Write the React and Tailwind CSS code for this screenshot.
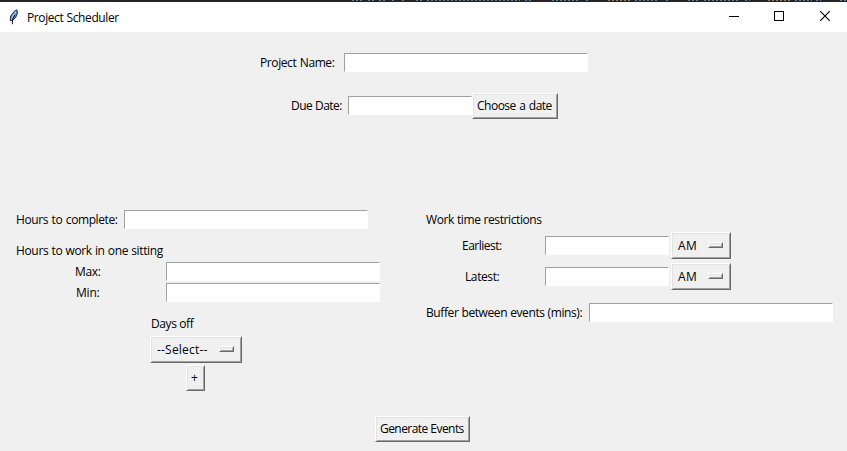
import React from "react";

function Label({ className = "", children }) {
  return <span className={`block whitespace-nowrap ${className}`}>{children}</span>;
}

function Entry({ className = "" }) {
  return (
    <input
      type="text"
      className={`block h-[19px] shrink-0 border border-t-[#a0a0a0] border-l-[#a0a0a0] border-r-white border-b-white bg-white px-px outline-none ${className}`}
    />
  );
}

function Raised({ className = "", children }) {
  return (
    <button
      type="button"
      className={`flex shrink-0 items-center border border-t-white border-l-white border-r-[#696969] border-b-[#696969] bg-[#f0f0f0] whitespace-nowrap shadow-[inset_1px_1px_0_#e3e3e3,inset_-1px_-1px_0_#a0a0a0] ${className}`}
    >
      {children}
    </button>
  );
}

function OptionMenu({ className = "", textClass = "", children }) {
  return (
    <Raised className={`h-[27px] justify-between pr-[7px] pl-[6px] ${className}`}>
      <span className={textClass}>{children}</span>
      <span className="-mt-[1px] block h-[6px] w-[15px] border border-t-white border-l-white border-r-[#696969] border-b-[#696969] shadow-[inset_1px_1px_0_#e3e3e3,inset_-1px_-1px_0_#a0a0a0]" />
    </Raised>
  );
}

const codeRuns = [
  [352, 363], [368, 374], [379, 387], [392, 394], [402, 404], [416, 423], [427, 520], [525, 533],
  [552, 578], [586, 590], [608, 630], [635, 658], [666, 670], [688, 700], [704, 738], [745, 750],
  [768, 790], [795, 812], [816, 821], [840, 847],
];

function BackgroundStrip() {
  return (
    <svg className="block h-[2px] w-full bg-[#262427]" viewBox="0 0 847 2" shapeRendering="crispEdges">
      {codeRuns.map(([a, b], i) => (
        <line key={a} x1={a} x2={b} y1="0.5" y2="0.5" stroke={i % 6 === 4 ? "#8b7c5c" : "#5c7f9c"} strokeDasharray="2 2" />
      ))}
    </svg>
  );
}

function Feather() {
  return (
    <svg className="block h-4 w-4" viewBox="0 0 16 16">
      <path d="M10 .8 7 2.6 3.7 7 3.2 11.6 5.8 11.4 8.8 8.2 10.4 4Z" fill="#4f8ad2" stroke="#26303c" strokeWidth="1" />
      <path d="M9 2.4 6 6.4 4.4 10.6" stroke="#a9cbf0" strokeWidth="1.1" fill="none" />
      <path d="M7.8 6 5.6 10.4 5.3 15.2" stroke="#111" strokeWidth="1" fill="none" />
    </svg>
  );
}

function TitleBar() {
  return (
    <header className="flex h-[30px] items-center bg-white">
      <div className="w-[27px] pl-[7px]"><Feather /></div>
      <Label className="tracking-[-0.4px] [word-spacing:0.5px]">Project Scheduler</Label>
      <div className="ml-auto flex">
        <svg className="block h-[30px] w-[138px]" viewBox="0 0 138 30" fill="none" stroke="#000">
          <path d="M20 14.5h10" shapeRendering="crispEdges" />
          <path d="M65.5 9.5h9v9h-9z" shapeRendering="crispEdges" />
          <path d="m111.2 9.2 9.6 9.6m0-9.6-9.6 9.6" strokeWidth="1.1" />
        </svg>
      </div>
    </header>
  );
}

export default function App() {
  return (
    <div className="flex h-[451px] w-[847px] flex-col overflow-hidden bg-[#f0f0f0] font-['Open_Sans','Noto_Sans',sans-serif] text-[12px] leading-[17px] text-black">
      <BackgroundStrip />
      <TitleBar />
      <main className="flex flex-1 flex-col">
        <section className="h-[178px] pt-[21px]">
          <div className="flex h-[19px] items-center pl-[260px]">
            <Label className="w-[84px] tracking-[-0.4px] [word-spacing:0.7px]">Project Name:</Label>
            <Entry className="w-[244px]" />
          </div>
          <div className="mt-[21px] flex h-[26px] items-center pl-[291px]">
            <Label className="w-[57px] pb-[2px] tracking-[-0.5px]">Due Date:</Label>
            <Entry className="w-[124px] -mt-[1px]" />
            <Raised className="h-[26px] w-[86px] pb-px pl-1 tracking-[-0.5px] [word-spacing:0.8px]">Choose a date</Raised>
          </div>
        </section>

        <div className="flex h-[206px]">
          <section className="w-[426px] pl-4">
            <div className="flex h-[19px] items-center">
              <Label className="w-[108px] tracking-[-0.4px] [word-spacing:0.8px]">Hours to complete:</Label>
              <Entry className="w-[244px]" />
            </div>
            <Label className="mt-[13px] h-5 tracking-[-0.35px] [word-spacing:0.4px]">Hours to work in one sitting</Label>
            <div className="flex h-[19px] items-center pl-[59px]">
              <Label className="w-[91px] tracking-[-0.3px]">Max:</Label>
              <Entry className="w-[214px]" />
            </div>
            <div className="mt-[2px] flex h-[19px] items-center pl-[60px]">
              <Label className="w-[90px] tracking-[-0.2px]">Min:</Label>
              <Entry className="w-[214px]" />
            </div>
            <div className="mt-[13px] pl-[134px]">
              <Label className="h-[21px] pl-px tracking-[-0.4px]">Days off</Label>
              <OptionMenu className="w-[92px]" textClass="tracking-[0.2px]">--Select--</OptionMenu>
              <Raised className="mt-[2px] ml-9 h-[26px] w-[19px] justify-center pr-[2px] pb-px">+</Raised>
            </div>
          </section>

          <section className="flex-1">
            <Label className="h-[22px] pt-px tracking-[-0.4px] [word-spacing:0.3px]">Work time restrictions</Label>
            <div className="flex h-[27px] items-center pl-9">
              <Label className="w-[83px] tracking-[-0.5px]">Earliest:</Label>
              <Entry className="w-[124px]" />
              <OptionMenu className="ml-[2px] w-[60px]" textClass="tracking-[0.3px]">AM</OptionMenu>
            </div>
            <div className="mt-1 flex h-[27px] items-center pl-[39px]">
              <Label className="w-[80px] tracking-[-0.4px]">Latest:</Label>
              <Entry className="w-[124px]" />
              <OptionMenu className="ml-[2px] w-[60px]" textClass="tracking-[0.3px]">AM</OptionMenu>
            </div>
            <div className="mt-[13px] flex h-[19px] items-center">
              <Label className="w-[163px] tracking-[-0.4px] [word-spacing:0.3px]">Buffer between events (mins):</Label>
              <Entry className="w-[244px]" />
            </div>
          </section>
        </div>

        <Raised className="ml-[375px] h-[26px] w-[95px] pb-px pl-1 tracking-[-0.55px]">Generate Events</Raised>
      </main>
    </div>
  );
}
